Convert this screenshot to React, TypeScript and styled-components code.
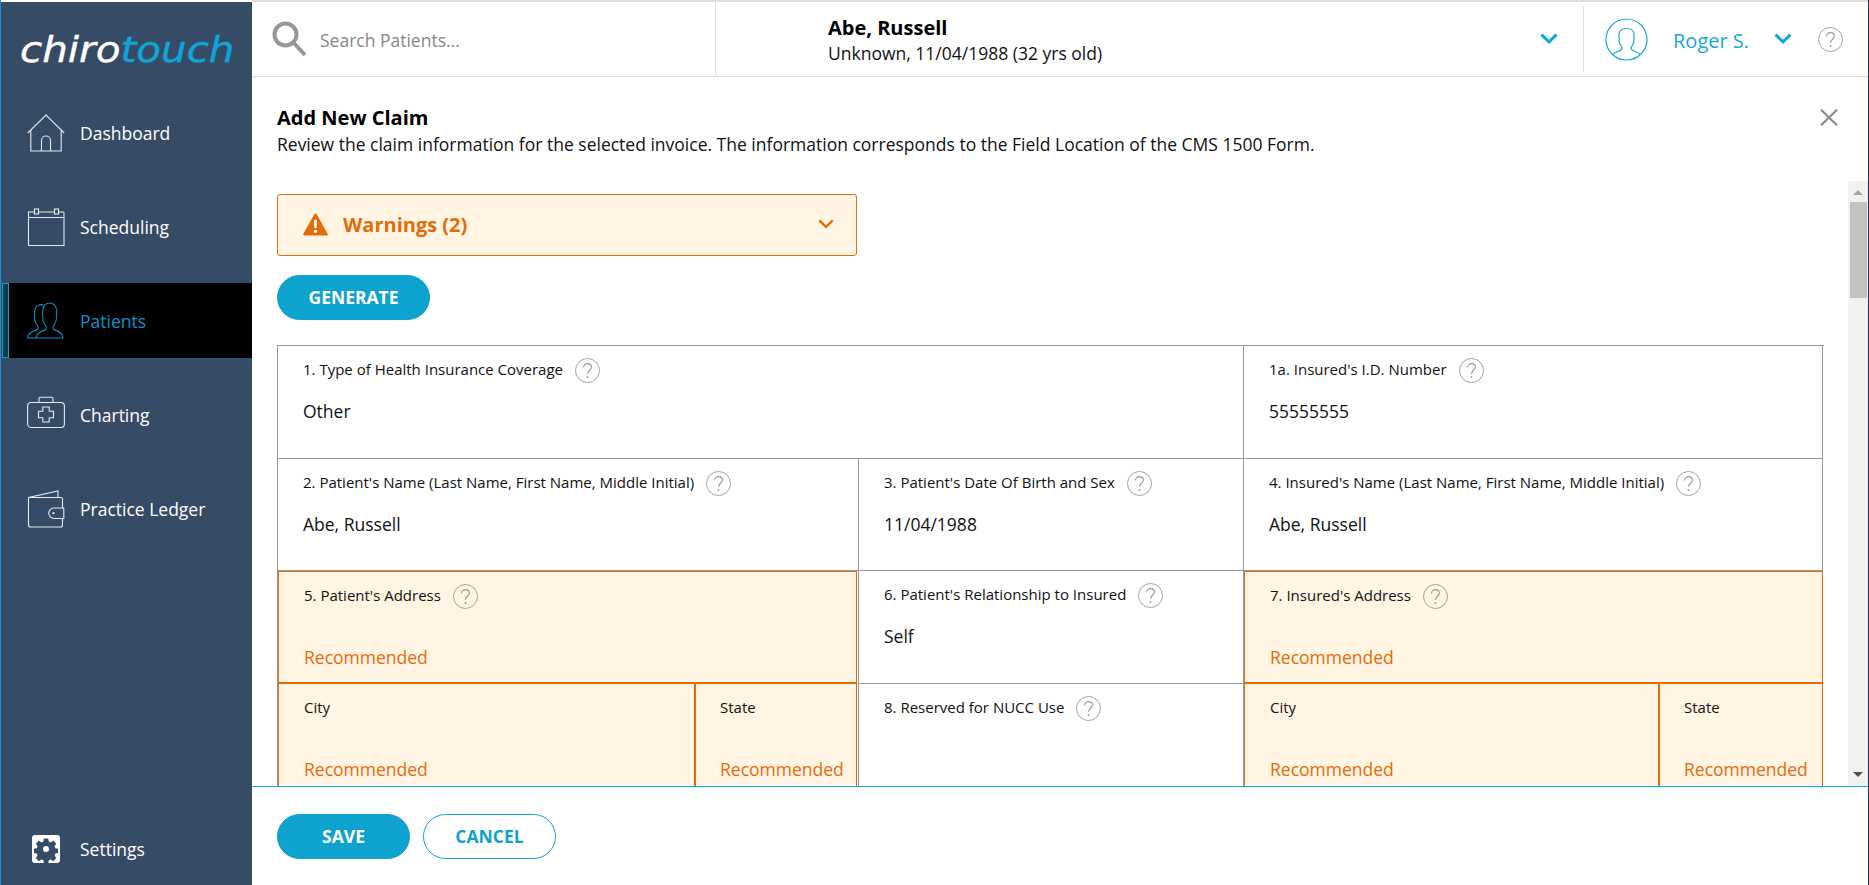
import styled, { createGlobalStyle } from "styled-components";

const BLUE = "#0ea2cf";
const ORANGE = "#e36c0a";
const CREAM = "#fff5e2";
const FONT = `"Open Sans", "Noto Sans", sans-serif`;

const GlobalStyle = createGlobalStyle`
  html, body { margin: 0; padding: 0; height: 100%; overflow: hidden; background: #fff; }
  #root { height: 100%; }
  * { box-sizing: border-box; }
`;

const Shell = styled.div`
  display: flex;
  height: 885px;
  width: 1869px;
  font-family: ${FONT};
  color: #111;
  border-left: 1px solid #1c8fdc;
  border-right: 1px solid #1d2c4f;
  overflow: hidden;
`;

const Sidebar = styled.nav`
  width: 251px;
  flex: none;
  margin-top: 2px;
  background: #364c66;
  display: flex;
  flex-direction: column;
`;

const Logo = styled.div`
  height: 93px;
  padding: 26px 0 0 19px;
  font-family: "DejaVu Sans", sans-serif;
  font-size: 35px;
  line-height: 44px;
  font-style: italic;
  white-space: nowrap;
  color: #fff;
  -webkit-text-stroke: 0.4px currentColor;
  transform: scaleX(1.155);
  transform-origin: 19px 0;
  span { color: #0ea5d8; }
`;

const NavList = styled.div`
  display: flex;
  flex-direction: column;
  gap: 19px;
  flex: 1;
`;

const NavItem = styled.div<{ $active?: boolean }>`
  position: relative;
  height: 75px;
  display: flex;
  align-items: center;
  margin-left: ${(p) => (p.$active ? 1 : 0)}px;
  padding-left: ${(p) => (p.$active ? 25 : 26)}px;
  gap: 15px;
  font-size: 17.5px;
  color: ${(p) => (p.$active ? "#0b93c8" : "#fff")};
  background: ${(p) => (p.$active ? "#000" : "transparent")};
  &::before {
    content: "";
    display: ${(p) => (p.$active ? "block" : "none")};
    position: absolute;
    left: 0;
    top: 0;
    bottom: 0;
    width: 5px;
    border: 1px solid #0ea2cf;
    background: #12384a;
  }
  svg { width: 38px; height: 38px; flex: none; }
`;

const SettingsItem = styled(NavItem)`
  margin-top: auto;
  height: 72px;
  padding-left: 31px;
  gap: 20px;
  svg { width: 28px; height: 28px; }
`;

const Main = styled.div`
  flex: 1;
  min-width: 0;
  display: flex;
  flex-direction: column;
  border-top: 2px solid #dedede;
`;

const Header = styled.header`
  height: 75px;
  flex: none;
  display: flex;
  align-items: center;
  border-bottom: 1px solid #dedede;
`;

const SearchBox = styled.div`
  width: 464px;
  height: 100%;
  flex: none;
  display: flex;
  align-items: center;
  gap: 13px;
  padding-left: 20px;
  border-right: 1px solid #dedede;
  svg { width: 35px; height: 36px; flex: none; }
`;

const SearchInput = styled.input`
  border: 0;
  outline: 0;
  width: 300px;
  padding: 2px 0 0;
  font: 17.5px ${FONT};
  color: #555;
  background: transparent;
  &::placeholder { color: #868686; opacity: 1; }
`;

const PatientBar = styled.div`
  flex: 1;
  display: flex;
  align-items: center;
  padding-left: 112px;
  height: 100%;
  svg { margin-left: auto; margin-right: 25px; }
`;

const PatientInfo = styled.div`
  display: flex;
  flex-direction: column;
  line-height: 25px;
  font-size: 17.5px;
  padding-top: 3px;
  b { font-weight: 700; font-size: 20px; color: #000; margin: -1px 0 1px; }
`;

const UserBar = styled.div`
  width: 285px;
  flex: none;
  height: 66px;
  border-left: 1px solid #dedede;
  display: flex;
  align-items: center;
  padding-left: 21px;
  color: #19a7d8;
  font-size: 20px;
  svg:last-child { margin-left: 26px; }
`;

const UserName = styled.span`
  margin-left: 25px;
  width: 101px;
  padding-top: 2px;
`;

const Content = styled.div`
  flex: 1;
  min-height: 0;
  display: flex;
  flex-direction: column;
`;

const TitleBlock = styled.div`
  position: relative;
  flex: none;
  height: 104px;
  padding: 28px 23px 0 25px;
`;

const Title = styled.h1`
  margin: 0;
  font-size: 20px;
  line-height: 26px;
  font-weight: 700;
  color: #000;
`;

const Subtitle = styled.p`
  margin: 0;
  font-size: 17.5px;
  line-height: 26px;
`;

const CloseButton = styled.svg`
  position: absolute;
  right: 30px;
  top: 32px;
  width: 18px;
  height: 17px;
`;

const ScrollArea = styled.div`
  flex: 1;
  min-height: 0;
  display: flex;
`;

const ScrollBody = styled.div`
  flex: 1;
  min-width: 0;
  overflow: hidden;
  padding: 13px 24px 0 25px;
`;

const Warning = styled.div`
  width: 580px;
  height: 62px;
  border: 1px solid ${ORANGE};
  border-radius: 3px;
  background: ${CREAM};
  color: ${ORANGE};
  display: flex;
  align-items: center;
  padding: 0 22px 2px 25px;
  font-size: 20px;
  font-weight: 700;
  svg:first-child { margin-right: 15px; }
  svg:last-child { margin-left: auto; }
`;

const PillButton = styled.button<{ $outline?: boolean; $wide?: boolean }>`
  height: 45px;
  width: ${(p) => (p.$wide ? 153 : 133)}px;
  border-radius: 23px;
  border: 1px solid ${BLUE};
  background: ${(p) => (p.$outline ? "#fff" : BLUE)};
  color: ${(p) => (p.$outline ? BLUE : "#fff")};
  font: 700 17.5px ${FONT};
  padding: 0 0 2px;
`;

const GenerateRow = styled.div`
  margin: 19px 0 25px;
  height: 45px;
`;

const ClaimGrid = styled.div`
  display: grid;
  grid-template-columns: 581px 385px 579px;
  grid-template-rows: 113px 112px 113px 113px;
  border-top: 1px solid #999;
  border-left: 1px solid #999;
`;

const insetRule = `
  margin-right: 1px;
  box-shadow: 1px 0 0 #fff, 2px 0 0 #999;
  margin-right: 2px;
`;

const Cell = styled.div<{ $span?: number; $warn?: boolean; $inset?: boolean }>`
  grid-column: span ${(p) => p.$span ?? 1};
  padding: 10px 0 0 25px;
  border-right: 1px solid #999;
  border-bottom: 1px solid #999;
  min-width: 0;
  ${(p) =>
    p.$warn &&
    `
    background: ${CREAM};
    border: 1px solid ${ORANGE};
    border-bottom-width: 2px;
  `}
  ${(p) => p.$inset && insetRule}
`;

const SplitCell = styled.div<{ $cols: string; $inset?: boolean }>`
  display: grid;
  grid-template-columns: ${(p) => p.$cols};
  background: ${CREAM};
  border-left: 1px solid ${ORANGE};
  border-right: 1px solid ${ORANGE};
  min-width: 0;
  ${(p) => p.$inset && insetRule}
`;

const SplitPart = styled.div`
  padding: 10px 0 0 25px;
  & + & { border-left: 2px solid ${ORANGE}; padding-left: 24px; }
`;

const LabelRow = styled.div`
  height: 25px;
  margin-top: 2px;
  display: flex;
  align-items: center;
  gap: 12px;
  font-size: 15px;
  color: #111;
  white-space: nowrap;
  span { padding-bottom: 4px; }
`;

const HelpGlyph = styled.svg`
  width: 25px;
  height: 25px;
  flex: none;
`;

const Value = styled.div`
  margin-top: 16px;
  font-size: 17.5px;
  line-height: 24px;
`;

const Recommended = styled.div`
  margin-top: 36px;
  font-size: 17.5px;
  line-height: 24px;
  color: ${ORANGE};
  white-space: nowrap;
`;

const Scrollbar = styled.div`
  width: 20px;
  flex: none;
  background: #f1f1f1;
  display: flex;
  flex-direction: column;
  align-items: center;
  padding: 9px 0 9px;
`;

const Arrow = styled.div<{ $down?: boolean }>`
  width: 0;
  height: 0;
  border-left: 5px solid transparent;
  border-right: 5px solid transparent;
  ${(p) => (p.$down ? "border-top: 5px solid #505050;" : "border-bottom: 5px solid #a3a3a3;")}
  ${(p) => p.$down && "margin-top: auto;"}
`;

const Thumb = styled.div`
  width: 17px;
  height: 96px;
  margin-top: 7px;
  background: #c1c1c1;
`;

const Footer = styled.footer`
  height: 99px;
  flex: none;
  border-top: 1px solid #0fb0dc;
  padding: 27px 25px 0;
  display: flex;
  gap: 13px;
  align-items: flex-start;
`;

const HomeIcon = () => (
  <svg viewBox="0 0 38 38" fill="none" stroke="#e6e9ee" strokeWidth="1.1">
    <path d="M.8 19 19 1l18.200 18M3.800 16.500V37h30.400V16.500" />
    <path d="M14.500 37V26.500a4.500 4.500 0 0 1 9 0V37" />
  </svg>
);

const CalendarIcon = () => (
  <svg viewBox="0 0 38 38" fill="none" stroke="#e6e9ee" strokeWidth="1.1">
    <path d="M1.500 4h34.500a1 1 0 0 1 1 1v32.500H1.500z" />
    <path d="M1.500 9.500H37" />
    <rect x="7.500" y="1" width="4" height="5" fill="#364c66" />
    <rect x="27.500" y="1" width="4" height="5" fill="#364c66" />
  </svg>
);

const PatientsIcon = () => (
  <svg viewBox="0 0 38 38" fill="none" stroke="#0b93c8" strokeWidth="1">
    <g transform="translate(0 -5.400) scale(1 1.150)">
      <path d="M9 36c.3-3 3-5.300 8-6.600 1.600-.5 2.300-1.100 2.300-2.600 0-1.200-1.200-2-2-3.400-1-1.600-1.700-3.800-1.700-6.700 0-2-.2-3.400.3-5.300.8-4 3.800-5.800 6.600-5.800 3.500 0 6.300 2.300 7 5.800.5 2 .2 3.500.2 5.300 0 3-.8 5-1.700 6.700-.8 1.300-2 2.200-2 3.400 0 1.500.9 2.100 2.800 2.600 5 1.300 6.900 3.600 7.200 6.600z" />
      <path d="M.5 36c.2-3 3-5.300 7.800-6.600 1.500-.4 2.800-1 2.800-2.400 0-1.200-1.100-2-1.900-3.200-1-1.600-1.700-3.700-1.700-6.400 0-1.800-.2-3.200.2-5C8.300 9 11 7 13.700 7c1 0 2 .2 2.800.6" />
      <path d="M.5 36H9" />
    </g>
  </svg>
);

const ChartingIcon = () => (
  <svg viewBox="0 0 38 38" fill="none" stroke="#e6e9ee" strokeWidth="1.1">
    <rect x=".6" y="6.500" width="36.800" height="25" rx="3.500" />
    <path d="M12 6.500V2.800A1.500 1.500 0 0 1 13.500 1.300h11A1.500 1.500 0 0 1 26 2.800v3.700" />
    <path d="M15.800 11h6.400v4.300h4.300v6.400h-4.300V26h-6.400v-4.300h-4.300v-6.400h4.300z" />
  </svg>
);

const WalletIcon = () => (
  <svg viewBox="0 0 38 38" fill="none" stroke="#e6e9ee" strokeWidth="1.1">
    <path d="M1.500 7.500 31 1v6.500" />
    <path d="M1.500 7.500h32.500a1.500 1.500 0 0 1 1.500 1.500v9M35.500 28.500V35a2 2 0 0 1-2 2H3.500a2 2 0 0 1-2-2V7.500" />
    <path d="M27 18h9.800v10.500H27a5.250 5.250 0 0 1 0-10.500z" />
    <circle cx="26.500" cy="23.200" r=".6" fill="#e6e9ee" />
  </svg>
);

const GearIcon = () => (
  <svg viewBox="0 0 28 28">
    <rect width="28" height="28" rx="3" fill="#fff" />
    <path
      fill="#364c66"
      fillRule="evenodd"
      d="M11.800 3.500h4.400l.5 3 2 .9 2.500-1.800 3.100 3.100-1.800 2.500.9 2 2.600.5v4.400l-2.600.5-.8 2 1.800 2.500-3.100 3.100-2.500-1.800-2 .9-.5 3h-4.400l-.5-3-2-.9-2.500 1.800-3.100-3.100 1.800-2.500-.9-2-2.700-.5v-4.400l2.700-.5.9-2-1.800-2.500 3.100-3.100 2.500 1.800 2-.9zM14 11a3 3 0 1 0 0 6 3 3 0 0 0 0-6z"
    />
  </svg>
);

const SearchIcon = () => (
  <svg viewBox="0 0 35 36" fill="none" stroke="#979797">
    <circle cx="13.500" cy="13.500" r="11" strokeWidth="4" />
    <path d="M21.500 21.500 33 34" strokeWidth="4" />
  </svg>
);

const Chevron = ({ color = "#0ea8db", w = 18, sw = 3 }: { color?: string; w?: number; sw?: number }) => (
  <svg width={w} height={w * 0.62} viewBox="0 0 18 11" fill="none" stroke={color} strokeWidth={sw}>
    <path d="M1.500 1.500 9 8.800l7.500-7.300" />
  </svg>
);

const AvatarIcon = () => (
  <svg width="43" height="43" viewBox="0 0 43 43" fill="none" stroke="#19a7d8" strokeWidth="1.2">
    <circle cx="21.500" cy="21.500" r="20.500" />
    <path d="M8 36.500c1-1.500 3-2.500 6-3.500 2-.7 3-1.500 3-3 0-1.500-1.300-2.500-2-4-1-1.800-1.200-3-1-5 .2-1.500-.3-3 0-5 .5-4 3.500-5.500 7.500-5.500s7 1.500 7.500 5.500c.3 2-.2 3.500 0 5 .2 2 0 3.200-1 5-.7 1.500-2 2.500-2 4 0 1.500 1 2.300 3 3 3 1 5 2 6 3.500" />
  </svg>
);

const HelpIcon = () => (
  <HelpGlyph viewBox="0 0 25 25" fill="none">
    <circle cx="12.500" cy="12.500" r="12" stroke="#999" strokeWidth=".9" />
    <path d="M8.500 9.500c0-2.500 1.700-3.900 4-3.900s3.900 1.400 3.900 3.500c0 3-3.900 3.300-3.900 6.700" stroke="#999" strokeWidth="1.100" />
    <circle cx="12.500" cy="19" r=".9" fill="#999" />
  </HelpGlyph>
);

const CloseIcon = () => (
  <CloseButton viewBox="0 0 18 17" fill="none" stroke="#8a8a8a" strokeWidth="2.200">
    <path d="M1 .8 17 16.200M17 .8 1 16.200" />
  </CloseButton>
);

const AlertIcon = () => (
  <svg width="25" height="23" viewBox="0 0 25 24" preserveAspectRatio="none">
    <path fill={ORANGE} d="M12.500.5c.5 0 .9.3 1.200.8l11 20.700c.4.800-.1 1.500-.9 1.500H1.200c-.8 0-1.300-.7-.9-1.500l11-20.700c.3-.5.7-.8 1.200-.8z" />
    <path fill="#fff" d="M11 7h3l-.4 9h-2.200zM12.500 17.400a1.700 1.700 0 1 1 0 3.400 1.700 1.700 0 0 1 0-3.400z" />
  </svg>
);

type FieldProps = { label: string; value?: string; help?: boolean };

const Field = ({ label, value, help = true }: FieldProps) => (
  <>
    <LabelRow>
      <span>{label}</span>
      {help && <HelpIcon />}
    </LabelRow>
    {value && <Value>{value}</Value>}
  </>
);

const RecommendedField = ({ label, help }: { label: string; help?: boolean }) => (
  <>
    <Field label={label} help={help} />
    <Recommended>Recommended</Recommended>
  </>
);

export default function App() {
  return (
    <>
      <GlobalStyle />
      <Shell>
        <Sidebar>
          <Logo>
            chiro<span>touch</span>
          </Logo>
          <NavList>
            <NavItem>
              <HomeIcon />
              Dashboard
            </NavItem>
            <NavItem>
              <CalendarIcon />
              Scheduling
            </NavItem>
            <NavItem $active>
              <PatientsIcon />
              Patients
            </NavItem>
            <NavItem>
              <ChartingIcon />
              Charting
            </NavItem>
            <NavItem>
              <WalletIcon />
              Practice Ledger
            </NavItem>
            <SettingsItem>
              <GearIcon />
              Settings
            </SettingsItem>
          </NavList>
        </Sidebar>
        <Main>
          <Header>
            <SearchBox>
              <SearchIcon />
              <SearchInput placeholder="Search Patients..." />
            </SearchBox>
            <PatientBar>
              <PatientInfo>
                <b>Abe, Russell</b>
                <span>Unknown, 11/04/1988 (32 yrs old)</span>
              </PatientInfo>
              <Chevron />
            </PatientBar>
            <UserBar>
              <AvatarIcon />
              <UserName>Roger S.</UserName>
              <Chevron />
              <HelpIcon />
            </UserBar>
          </Header>
          <Content>
            <TitleBlock>
              <Title>Add New Claim</Title>
              <Subtitle>
                Review the claim information for the selected invoice. The information corresponds to the Field Location of the CMS 1500 Form.
              </Subtitle>
              <CloseIcon />
            </TitleBlock>
            <ScrollArea>
              <ScrollBody>
                <Warning>
                  <AlertIcon />
                  Warnings (2)
                  <Chevron color={ORANGE} w={16} sw={2.6} />
                </Warning>
                <GenerateRow>
                  <PillButton $wide>GENERATE</PillButton>
                </GenerateRow>
                <ClaimGrid>
                  <Cell $span={2}>
                    <Field label="1. Type of Health Insurance Coverage" value="Other" />
                  </Cell>
                  <Cell>
                    <Field label="1a. Insured's I.D. Number" value="55555555" />
                  </Cell>
                  <Cell>
                    <Field label="2. Patient's Name (Last Name, First Name, Middle Initial)" value="Abe, Russell" />
                  </Cell>
                  <Cell>
                    <Field label="3. Patient's Date Of Birth and Sex" value="11/04/1988" />
                  </Cell>
                  <Cell>
                    <Field label="4. Insured's Name (Last Name, First Name, Middle Initial)" value="Abe, Russell" />
                  </Cell>
                  <Cell $warn $inset>
                    <RecommendedField label="5. Patient's Address" help />
                  </Cell>
                  <Cell>
                    <Field label="6. Patient's Relationship to Insured" value="Self" />
                  </Cell>
                  <Cell $warn>
                    <RecommendedField label="7. Insured's Address" help />
                  </Cell>
                  <SplitCell $cols="415px 1fr" $inset>
                    <SplitPart>
                      <RecommendedField label="City" help={false} />
                    </SplitPart>
                    <SplitPart>
                      <RecommendedField label="State" help={false} />
                    </SplitPart>
                  </SplitCell>
                  <Cell>
                    <Field label="8. Reserved for NUCC Use" />
                  </Cell>
                  <SplitCell $cols="413px 1fr">
                    <SplitPart>
                      <RecommendedField label="City" help={false} />
                    </SplitPart>
                    <SplitPart>
                      <RecommendedField label="State" help={false} />
                    </SplitPart>
                  </SplitCell>
                </ClaimGrid>
              </ScrollBody>
              <Scrollbar>
                <Arrow />
                <Thumb />
                <Arrow $down />
              </Scrollbar>
            </ScrollArea>
          </Content>
          <Footer>
            <PillButton>SAVE</PillButton>
            <PillButton $outline>CANCEL</PillButton>
          </Footer>
        </Main>
      </Shell>
    </>
  );
}
